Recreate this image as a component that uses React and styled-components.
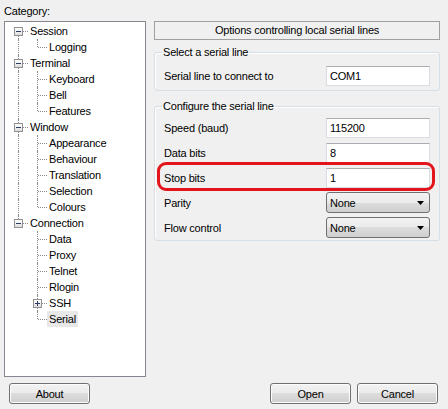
import React from "react";
import styled, { createGlobalStyle } from "styled-components";

const GlobalStyle = createGlobalStyle`
  html, body {
    margin: 0;
    padding: 0;
    background: #f0f0f0;
  }
  body {
    font-family: "Liberation Sans", Arial, sans-serif;
    font-size: 11px;
    letter-spacing: -0.2px;
    color: #000;
  }
`;

const Window = styled.div`
  width: 448px;
  height: 409px;
  box-sizing: border-box;
  padding: 4px 8px 0 4px;
  display: flex;
  flex-direction: column;
`;

const Main = styled.div`
  display: grid;
  grid-template-columns: 142px 286px;
  column-gap: 8px;
`;

const LeftCol = styled.div`
  display: flex;
  flex-direction: column;
`;

const CategoryLabel = styled.div`
  height: 17px;
  line-height: 14px;
`;

const TreeBox = styled.div`
  height: 356px;
  box-sizing: border-box;
  border: 1px solid #828790;
  background: #fff;
  padding: 1px 0 0 4px;
`;

const TreeRow = styled.div`
  display: flex;
  height: 16px;
`;

const Guide = styled.div`
  position: relative;
  width: 19px;
  flex: none;

  &::before {
    content: "";
    display: ${(p) => (p.$up || p.$down ? "block" : "none")};
    position: absolute;
    left: 9px;
    top: ${(p) => (p.$up ? "0" : "8px")};
    bottom: ${(p) => (p.$down ? "0" : "8px")};
    border-left: 1px dotted #8a8a8a;
  }

  &::after {
    content: "";
    display: ${(p) => (p.$branch ? "block" : "none")};
    position: absolute;
    left: 10px;
    right: 0;
    top: 8px;
    border-top: 1px dotted #8a8a8a;
  }
`;

const Expander = styled.span`
  position: absolute;
  z-index: 1;
  left: 5px;
  top: 4px;
  width: 9px;
  height: 9px;
  box-sizing: border-box;
  border: 1px solid #919191;
  background: linear-gradient(#ffffff, #dedede);
  display: flex;
  align-items: center;
  justify-content: center;

  &::before {
    content: "";
    position: absolute;
    left: 1px;
    right: 1px;
    top: 3px;
    height: 1px;
    background: #2c3e64;
  }

  &::after {
    content: "";
    display: ${(p) => (p.$collapsed ? "block" : "none")};
    position: absolute;
    top: 1px;
    bottom: 1px;
    left: 3px;
    width: 1px;
    background: #2c3e64;
  }
`;

const ItemText = styled.span`
  padding: 0 2px;
  line-height: 16px;
  white-space: nowrap;
  background: ${(p) => (p.$selected ? "#e8e8e8" : "transparent")};
`;

const RightCol = styled.div`
  display: flex;
  flex-direction: column;
  padding-top: 17px;
`;

const Header = styled.div`
  height: 19px;
  box-sizing: border-box;
  border: 1px solid #a0a0a0;
  text-align: center;
  line-height: 17px;
`;

const Group = styled.fieldset`
  margin: ${(p) => p.$top}px 0 0 0;
  padding: ${(p) => p.$padTop}px 9px ${(p) => p.$padBottom}px 9px;
  border: 1px solid #d5dfe5;
  border-radius: 3px;
  box-shadow: inset 1px 1px 0 #fff;
  min-width: 0;
`;

const Legend = styled.legend`
  margin-left: -2px;
  padding: 0 1px;
  line-height: 13px;
`;

const Rows = styled.div`
  display: flex;
  flex-direction: column;
  gap: 4px;
`;

const Row = styled.div`
  position: relative;
  display: flex;
  align-items: center;
  justify-content: space-between;
  height: 21px;

  &::after {
    content: "";
    display: ${(p) => (p.$highlight ? "block" : "none")};
    position: absolute;
    left: -7px;
    right: -5px;
    top: -5px;
    bottom: -3px;
    border: 3px solid #e3141c;
    border-radius: 9px;
  }
`;

const Field = styled.input`
  width: 104px;
  height: 20px;
  box-sizing: border-box;
  margin: 0;
  padding: 0 0 0 3px;
  border: 1px solid #dadce3;
  border-top-color: #abadb3;
  background: #fff;
  font: inherit;
  letter-spacing: inherit;
  color: #000;
  outline: none;
`;

const Combo = styled.div`
  width: 104px;
  height: 21px;
  box-sizing: border-box;
  display: flex;
  align-items: center;
  justify-content: space-between;
  padding: 0 5px 0 3px;
  border: 1px solid #707070;
  border-radius: 3px;
  background: linear-gradient(#f2f2f2 0%, #ebebeb 50%, #dddddd 50%, #cfcfcf 100%);
`;

const Footer = styled.div`
  display: flex;
  justify-content: space-between;
  margin-top: 6px;
  padding: 0 2px 0 5px;
`;

const ButtonGroup = styled.div`
  display: flex;
  gap: 6px;
`;

const Button = styled.button`
  width: 81px;
  height: 21px;
  margin: 0;
  padding: 0;
  border: 1px solid #707070;
  border-radius: 3px;
  background: linear-gradient(#f2f2f2 0%, #ebebeb 50%, #dddddd 50%, #cfcfcf 100%);
  box-shadow: inset 0 0 0 1px #fcfcfc;
  font: inherit;
  letter-spacing: inherit;
  color: #000;
`;

const tree = [
  { label: "Session", level: 0, expander: "open", guides: [{ down: true, branch: true }] },
  { label: "Logging", level: 1, guides: [{ up: true, down: true }, { up: true, branch: true }] },
  { label: "Terminal", level: 0, expander: "open", guides: [{ up: true, down: true, branch: true }] },
  { label: "Keyboard", level: 1, guides: [{ up: true, down: true }, { up: true, down: true, branch: true }] },
  { label: "Bell", level: 1, guides: [{ up: true, down: true }, { up: true, down: true, branch: true }] },
  { label: "Features", level: 1, guides: [{ up: true, down: true }, { up: true, branch: true }] },
  { label: "Window", level: 0, expander: "open", guides: [{ up: true, down: true, branch: true }] },
  { label: "Appearance", level: 1, guides: [{ up: true, down: true }, { up: true, down: true, branch: true }] },
  { label: "Behaviour", level: 1, guides: [{ up: true, down: true }, { up: true, down: true, branch: true }] },
  { label: "Translation", level: 1, guides: [{ up: true, down: true }, { up: true, down: true, branch: true }] },
  { label: "Selection", level: 1, guides: [{ up: true, down: true }, { up: true, down: true, branch: true }] },
  { label: "Colours", level: 1, guides: [{ up: true, down: true }, { up: true, branch: true }] },
  { label: "Connection", level: 0, expander: "open", guides: [{ up: true, branch: true }] },
  { label: "Data", level: 1, guides: [{}, { up: true, down: true, branch: true }] },
  { label: "Proxy", level: 1, guides: [{}, { up: true, down: true, branch: true }] },
  { label: "Telnet", level: 1, guides: [{}, { up: true, down: true, branch: true }] },
  { label: "Rlogin", level: 1, guides: [{}, { up: true, down: true, branch: true }] },
  { label: "SSH", level: 1, expander: "closed", guides: [{}, { up: true, down: true, branch: true }] },
  { label: "Serial", level: 1, selected: true, guides: [{}, { up: true, branch: true }] },
];

const settings = [
  { label: "Speed (baud)", value: "115200" },
  { label: "Data bits", value: "8" },
  { label: "Stop bits", value: "1", highlight: true },
  { label: "Parity", value: "None", combo: true },
  { label: "Flow control", value: "None", combo: true },
];

function DropArrow() {
  return (
    <svg width="7" height="4" viewBox="0 0 7 4">
      <polygon points="0,0 7,0 3.5,4" fill="#000" />
    </svg>
  );
}

function App() {
  return (
    <>
      <GlobalStyle />
      <Window>
        <Main>
          <LeftCol>
            <CategoryLabel>Category:</CategoryLabel>
            <TreeBox>
              {tree.map((item) => (
                <TreeRow key={item.label}>
                  {item.guides.map((g, i) => (
                    <Guide key={i} $up={g.up} $down={g.down} $branch={g.branch}>
                      {i === item.level && item.expander && (
                        <Expander $collapsed={item.expander === "closed"} />
                      )}
                    </Guide>
                  ))}
                  <ItemText $selected={item.selected}>{item.label}</ItemText>
                </TreeRow>
              ))}
            </TreeBox>
          </LeftCol>
          <RightCol>
            <Header>Options controlling local serial lines</Header>
            <Group $top={6} $padTop={6} $padBottom={4}>
              <Legend>Select a serial line</Legend>
              <Row>
                <span>Serial line to connect to</span>
                <Field readOnly defaultValue="COM1" />
              </Row>
            </Group>
            <Group $top={9} $padTop={4} $padBottom={2}>
              <Legend>Configure the serial line</Legend>
              <Rows>
                {settings.map((s) => (
                  <Row key={s.label} $highlight={s.highlight}>
                    <span>{s.label}</span>
                    {s.combo ? (
                      <Combo>
                        <span>{s.value}</span>
                        <DropArrow />
                      </Combo>
                    ) : (
                      <Field readOnly defaultValue={s.value} />
                    )}
                  </Row>
                ))}
              </Rows>
            </Group>
          </RightCol>
        </Main>
        <Footer>
          <Button>About</Button>
          <ButtonGroup>
            <Button>Open</Button>
            <Button>Cancel</Button>
          </ButtonGroup>
        </Footer>
      </Window>
    </>
  );
}

export default App;
